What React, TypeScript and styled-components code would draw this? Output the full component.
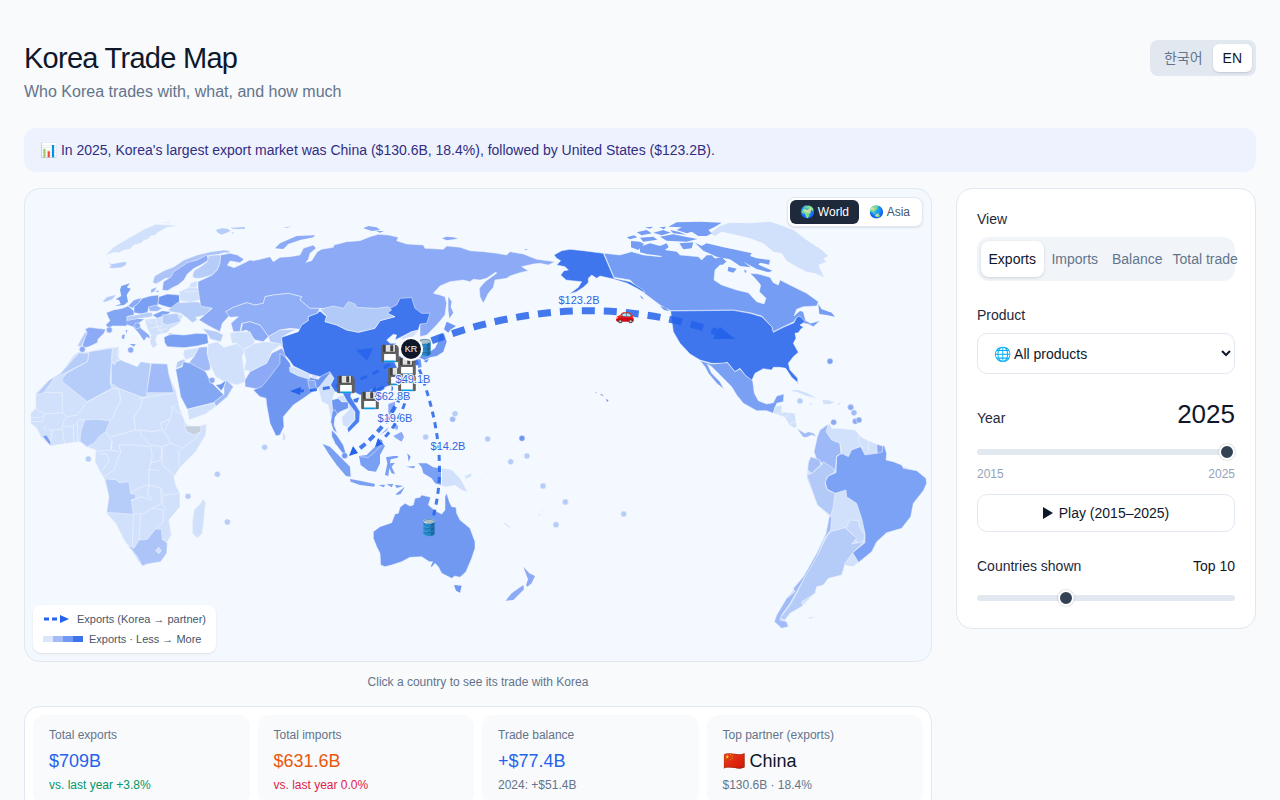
import React, { useState } from "react";
import styled, { createGlobalStyle } from "styled-components";

const Global = createGlobalStyle`
  *, *::before, *::after { box-sizing: border-box; }
  body { margin: 0; background: #f8fafc; color: #0f172a; font-family: "Liberation Sans", "Noto Sans CJK KR", sans-serif; font-size: 14px; line-height: 20px; }
  button, input, select { font: inherit; color: inherit; margin: 0; }
  h1, p, dl, dd { margin: 0; font-weight: 400; }
`;

const Page = styled.main`padding: 40px 24px;`;
const Header = styled.header`display: flex; justify-content: space-between; align-items: flex-start; margin-bottom: 24px;`;
const Title = styled.h1`font-size: 29px; line-height: 36px; letter-spacing: -0.025em;`;
const Subtitle = styled.p`margin-top: 4px; font-size: 16px; line-height: 24px; color: #64748b;`;
const Languages = styled.div`display: flex; padding: 4px; border-radius: 8px; background: #e2e8f0;`;
const Language = styled.button<{ $on?: boolean }>`
  border: 0; border-radius: 6px; padding: 4px 10px; line-height: 20px; white-space: nowrap;
  background: ${(p) => (p.$on ? "#fff" : "transparent")};
  color: ${(p) => (p.$on ? "#0f172a" : "#64748b")};
  box-shadow: ${(p) => (p.$on ? "0 1px 2px #0f172a26" : "none")};
`;
const Banner = styled.p`padding: 12px 16px; margin-bottom: 16px; border-radius: 12px; background: #eef2ff; color: #312e81;`;
const Columns = styled.div`display: grid; grid-template-columns: minmax(0, 1fr) 300px; gap: 24px; align-items: start;`;
const MapCard = styled.section`position: relative; border: 1px solid #e2e8f0; border-radius: 16px; overflow: hidden; background: #f4f9ff;`;
const MapSvg = styled.svg`display: block; width: 100%; height: auto;`;
const Scope = styled.div`
  position: absolute; top: 8px; right: 8px; display: flex; padding: 2px; border: 1px solid #e2e8f0;
  border-radius: 8px; background: #fff; box-shadow: 0 1px 2px #0f172a1a;
`;
const ScopeButton = styled.button<{ $on?: boolean }>`
  border: 0; border-radius: 6px; padding: 4px 10px; font-size: 12px; line-height: 16px;
  background: ${(p) => (p.$on ? "#1e293b" : "#fff")}; color: ${(p) => (p.$on ? "#fff" : "#475569")};
`;
const Legend = styled.div`
  position: absolute; left: 8px; bottom: 8px; display: grid; gap: 4px; padding: 6px 10px; border-radius: 8px;
  background: #fff; box-shadow: 0 1px 2px #0f172a1a; color: #475569; font-size: 11px; line-height: 16px;
`;
const LegendRow = styled.div<{ $gap: number }>`display: flex; align-items: center; gap: ${(p) => p.$gap}px;`;
const Ramp = styled.span`display: flex; width: 40px; height: 6px;`;
const RampStep = styled.span<{ $color: string }>`flex: 1; background: ${(p) => p.$color};`;
const Hint = styled.p`margin: 12px 0 16px; text-align: center; font-size: 12px; line-height: 16px; color: #64748b;`;
const Stats = styled.dl`display: grid; grid-template-columns: repeat(4, 1fr); gap: 8px; padding: 8px; border: 1px solid #e2e8f0; border-radius: 16px; background: #fff;`;
const Stat = styled.div`padding: 12px 16px; border-radius: 12px; background: #f8fafc;`;
const StatName = styled.dt`font-size: 12px; line-height: 16px; color: #64748b;`;
const StatValue = styled.dd<{ $color: string }>`margin-top: 4px; font-size: 18px; line-height: 28px; color: ${(p) => p.$color};`;
const StatNote = styled.dd<{ $color: string }>`margin-top: 2px; font-size: 12px; line-height: 16px; color: ${(p) => p.$color};`;

const Panel = styled.aside`display: grid; gap: 24px; padding: 20px; border: 1px solid #e2e8f0; border-radius: 16px; background: #fff;`;
const Field = styled.div<{ $gap?: number }>`display: grid; gap: ${(p) => p.$gap ?? 8}px;`;
const FieldLabel = styled.label`line-height: 20px; color: #1e293b;`;
const Segments = styled.div`display: grid; grid-template-columns: repeat(4, minmax(0, 1fr)); padding: 4px; border-radius: 12px; background: #f1f5f9;`;
const Segment = styled.button<{ $on?: boolean }>`
  border: 0; border-radius: 8px; padding: 8px 4px; line-height: 20px; white-space: nowrap;
  background: ${(p) => (p.$on ? "#fff" : "transparent")};
  color: ${(p) => (p.$on ? "#0f172a" : "#64748b")};
  box-shadow: ${(p) => (p.$on ? "0 1px 3px #0f172a26" : "none")};
`;
const Select = styled.select`width: 100%; height: 41px; padding: 0 12px; border: 1px solid #e2e8f0; border-radius: 10px; background: #fff;`;
const Row = styled.div`display: flex; justify-content: space-between; align-items: baseline;`;
const Year = styled.output`font-size: 26px; line-height: 32px;`;
const Range = styled.input`
  appearance: none; display: block; width: 100%; height: 20px; background: transparent;
  &::-webkit-slider-runnable-track { height: 6px; border-radius: 3px; background: #e2e8f0; }
  &::-webkit-slider-thumb { appearance: none; width: 16px; height: 16px; margin-top: -5px; border: 2px solid #fff; border-radius: 50%; background: #334155; box-shadow: 0 0 2px #0f172a4d; }
`;
const Ends = styled.div`display: flex; justify-content: space-between; font-size: 12px; line-height: 16px; color: #94a3b8;`;
const Play = styled.button`display: flex; align-items: center; justify-content: center; gap: 6px; height: 38px; border: 1px solid #e2e8f0; border-radius: 10px; background: #fff;`;

const FlowLabel = styled.text`font-size: 11px; fill: #2f66df; stroke: #f4f9ff; stroke-width: 2px; paint-order: stroke; text-anchor: middle;`;
const Cargo = styled.text`font-size: 16px; text-anchor: middle;`;

const C = {
  a: "#d2e1fb", b: "#b6ccf9", c: "#a0bbf7", d: "#8caaf5", e: "#7aa0f3", f: "#6f97f2", g: "#3f76ee", none: "#c5d0de",
};
type Shape = [string, string];
interface Region { x: number; y: number; shapes: Shape[]; islands?: Shape[]; borders?: string; dots?: [number, number, string][] }

// Each region is drawn on its own grid, three units to one unit of the map.
const regions: Region[] = [
  {
    x: 24, y: 380,
    shapes: [
      [C.a, "M165-85 195-85 250-97 285-100 285-65 300-55 340-40 350-55 380-50 430-48 434-15 455 30 466 80 480 118 490 135 515 140 548 132 545 165 515 215 470 260 450 290 455 315 468 340 468 380 435 420 442 465 430 485 428 520 410 545 370 552 355 558 340 540 335 530 300 480 275 430 248 400 255 350 240 295 225 270 213 245 215 210 185 200 170 185 130 190 80 198 50 170 38 145 20 130 20 100 35 85 35 40 75 0 110-20 150-75Z"],
      [C.b, "M115-5 130-22 190-55 195-85 280-98 262-50 258 10 265 25 190 65 115 5Z"],
      [C.b, "M35 45 75 0 110-20 165-82 195-80 190-55 130-25 90-5 60 38Z"],
      [C.b, "M262-50 290-60 340-40 350-55 380-50 368 50 355 52 285 25 262 10Z"],
      [C.a, "M265-95 285-100 280-78 285-65 270-45 262-60Z"],
      [C.c, "M382-50 430-48 434-20 450 38 368 38Z"],
      [C.b, "M182 120 215 118 258 122 245 155 225 170 210 190 190 200 168 185 170 155Z"],
      [C.b, "M243 297 275 299 285 308 315 305 320 340 335 343 335 357 322 360 328 403 248 397 255 350Z"],
      ["#acc4f8", "M312 495 330 505 345 480 370 478 395 447 412 448 415 478 430 490 428 520 410 545 370 552 355 558 340 530Z"],
      [C.e, "M55 168 68 165 80 185 80 198Z"],
      [C.none, "M480 138 530 138 530 155 510 165 490 155Z"],
      [C.a, "M538 355 545 370 535 460 520 475 505 460 505 425 510 390 528 372Z"],
      [C.a, "M395 512 404 502 412 512 404 521Z"],
    ],
    borders: "M60 38 115 38 115 98 60 102 35 85M115 98 130 110 160 105 190 65M60 102 55 125 20 125M20 113 50 112M75 150 85 150 115 148 120 120 130 110M115 148 122 192M85 150 80 185M148 138 150 190M120 140 150 138 165 118 182 120M160 130 162 186M265 25 285 28 290 60 265 115 258 122M190 65 265 25M355 52 350 80 330 110 335 150 300 160 262 170M245 155 265 185 262 210 215 215M225 222 250 222 255 245 235 270M262 185 262 210 285 215M285 195 330 195 380 200 385 230 375 270 375 315 340 325 320 340M285 195 290 215 270 270 240 290M335 150 350 150 380 155 415 150 410 130 440 115M350 150 350 165 380 195 415 200 410 240 378 250M440 115 445 80 455 80M440 115 430 135 420 155 440 190 475 205 515 175 530 155M415 200 415 255 450 285M440 190 415 200M465 210 465 255M375 268 405 272M375 315 410 325 420 345 465 340M410 325 412 370 385 385 360 400 328 403M375 315 370 345 385 355M320 362 350 350 385 360M328 403 325 500M350 405 345 480M385 385 420 390 415 430 395 447M415 345 418 375 428 390M345 55 445 40M415 478 425 478M440 80 485 115 480 135M60 140 68 150",
    dots: [[193, 237, C.b], [492, 349, C.b], [580, 283, C.b], [610, 426, C.b]],
  },
  {
    x: 24, y: 200,
    shapes: [
      [C.a, "M243 167 268 142 290 128 330 105 360 88 395 73 440 75 468 77 430 82 400 98 395 105 380 108 372 118 360 121 350 130 330 135 318 148 300 150 285 158 270 157Z"],
      [C.a, "M402 67 440 65 436 69Z"],
      [C.b, "M250 186 262 192 285 188 300 185 309 187 305 196 290 203 265 205 252 203 262 197Z"],
      ["#adc4f8", "M386 247 392 228 420 212 450 200 480 180 520 165 560 155 600 150 615 152 618 158 600 158 585 163 550 168 520 180 490 192 470 205 450 222 440 235 425 235 405 247 395 252Z"],
      [C.d, "M415 270 418 245 440 232 450 215 470 202 490 188 520 180 548 165 555 180 530 195 510 205 490 222 480 240 462 255 445 263 430 272Z"],
      [C.b, "M505 228 510 212 530 200 550 185 553 168 575 165 590 165 588 190 580 210 565 225 530 235 512 235Z"],
      ["#82a6f4", "M247 338 268 330 295 325 312 318 330 332 330 345 310 350 308 378 290 378 265 378 255 385 245 375 258 362 252 350Z"],
      [C.d, "M183 388 195 382 245 388 240 400 222 418 220 428 195 440 182 443 175 436 183 410 188 395Z"],
      [C.b, "M160 438 175 410 185 395 190 398 178 425 172 440Z"],
      [C.e, "M330 320 345 305 355 295 378 288 403 285 405 300 400 318 375 322 370 338 352 342 330 338Z"],
      [C.d, "M312 318 330 300 352 293 345 308 330 320 325 325Z"],
      [C.f, "M405 290 430 282 468 285 465 315 445 325 420 318 402 312Z"],
      [C.a, "M500 248 522 242 518 262 525 270 530 298 500 308 468 302 465 275 495 262Z"],
      [C.b, "M460 308 520 305 562 325 545 345 515 352 520 360 505 368 490 355 470 340 440 335 432 330Z"],
      [C.c, "M372 322 395 315 415 325 400 334 378 334Z"],
      ["#82a6f4", "M385 345 415 332 440 335 430 345 400 355Z"],
      [C.b, "M308 350 335 345 370 338 385 338 385 350 350 355 310 362Z"],
      [C.a, "M362 358 400 355 430 345 450 340 478 345 465 372 440 385 430 398 400 405 395 420 400 435 388 445 378 430 380 405 370 385Z"],
      [C.b, "M415 345 460 340 470 365 430 375 415 370Z"],
      [C.e, "M420 412 440 402 480 405 520 400 550 402 553 430 520 438 480 443 430 440 422 428ZM432 400 445 400 440 406Z"],
      [C.b, "M535 385 580 395 598 405 590 425 560 418 550 402Z"],
      [C.a, "M480 450 525 442 510 470 485 480 478 465Z"],
      [C.c, "M525 442 550 440 550 460 560 495 558 510 530 515 495 488 510 470Z"],
      [C.a, "M552 432 580 425 600 442 640 430 665 445 655 470 665 545 640 555 600 545 575 530 558 495 550 462Z"],
      [C.b, "M455 505 460 485 478 478 485 482 470 500Z"],
      ["#84a7f4", "M455 508 475 500 478 485 500 490 545 515 560 545 590 575 600 585 570 608 490 628 470 590 462 545Z"],
      [C.f, "M575 555 590 552 607 540 600 560 592 572Z"],
      [C.c, "M570 606 600 583 600 560 607 540 628 560 610 590 575 620Z"],
      [C.a, "M490 628 570 608 575 620 545 642 495 660Z"],
    ],
    islands: [
      [C.b, "M576 90 592 85 610 86 620 92 608 98 592 104 580 97ZM630 85 662 81 664 86 640 88ZM622 97 632 99 626 101Z"],
      [C.e, "M272 318 290 312 285 300 275 298 292 288 288 270 292 258 318 250 308 262 320 266 308 285 312 305 300 315Z"],
      [C.b, "M236 305 248 292 275 285 265 298 245 305Z"],
      [C.c, "M380 278 382 268 398 262 390 275ZM395 272 405 272 402 278Z"],
      [C.d, "M305 372 310 362 340 357 360 358 345 368 350 385 375 405 378 415 368 410 360 422 345 400 328 380ZM316 432 335 432 330 440ZM295 405 303 403 300 418 293 415ZM305 390 310 390 308 402Z"],
    ],
    borders: "M395 358 400 380 415 400M380 385 415 378M400 392 430 385M365 358 385 370M468 302 465 275M495 262 522 262M480 275 518 275",
    dots: [[256, 390, C.d], [340, 377, C.d], [175, 448, C.d], [320, 450, C.d], [564, 541, C.d]],
  },
  {
    x: 230, y: 200,
    shapes: [
      [C.d, "M-28 165 0 160 22 165 42 178 30 188 0 183-8 196 12 203 30 195 60 180 70 182 90 178 120 170 130 185 150 172 180 170 210 165 220 145 250 135 258 145 240 160 235 178 228 187 245 182 262 155 275 148 310 142 312 135 350 125 390 122 420 110 445 103 475 105 505 112 500 122 530 132 580 135 585 145 640 148 650 138 690 142 720 152 760 155 800 160 830 165 840 155 880 162 920 178 975 185 955 195 930 190 910 192 875 200 895 212 870 218 840 228 830 235 795 240 790 262 775 280 760 310 750 290 748 265 765 245 800 220 798 216 770 235 750 240 730 238 720 245 700 240 660 245 630 258 610 280 630 285 645 290 650 310 645 345 620 375 590 405 570 410 570 372 470 325 400 330 330 330 270 325 240 325 210 300 215 290 175 280 130 285 105 290 100 310 75 315 50 308 10 322-13 335 0 345-23 370-30 395-63 378-93 360-53 325-88 318-96 265-96 245-53 225-38 210-30 190Z"],
      ["#91aff6", "M-13 335 10 322 50 308 75 315 100 310 105 290 130 285 175 280 215 290 210 300 240 325 270 325 262 340 235 350 235 362 215 375 210 388 180 385 150 390 115 410 105 395 90 375 60 365 35 370 30 395 10 395 3 370 25 350 0 352Z"],
      [C.d, "M32 395 38 370 60 365 90 375 105 395 115 410 100 425 75 420 50 390Z"],
      [C.a, "M0 398 30 395 60 395 75 425 70 435 40 448 20 430 5 430Z"],
      [C.b, "M115 410 150 390 200 388 175 400 155 412 158 440 120 425Z"],
      [C.a, "M40 450 75 430 110 425 155 432 125 455 110 490 60 515 42 510 48 480Z"],
      [C.d, "M45 540 60 515 110 490 125 460 155 445 170 465 150 500 115 540 95 570 45 560Z"],
      [C.f, "M150 460 165 470 180 490 185 508 235 530 265 538 275 525 300 515 312 530 295 550 282 568 270 560 255 570 220 595 190 615 160 650 162 680 150 705 138 708 120 670 110 615 108 595 90 590 70 570 95 560 120 530 150 490Z"],
      [C.a, "M178 502 190 500 240 522 238 538 205 528 180 515ZM245 522 265 523 263 535 245 533Z"],
      [C.d, "M233 540 255 542 260 568 238 565Z"],
      [C.a, "M265 565 280 545 300 520 312 535 302 555 315 575 305 605 312 640 302 655 295 615 275 605Z"],
      [C.a, "M158 695 168 708 165 722 158 720Z"],
      [C.g, "M270 333 290 350 285 365 320 375 350 390 385 397 435 385 450 362 495 350 470 340 480 325 500 315 510 295 545 293 555 325 575 340 600 340 590 370 570 372 565 390 545 395 515 410 495 420 500 405 490 403 470 420 480 430 500 430 480 440 478 455 500 500 500 530 480 555 440 575 390 585 365 572 340 580 315 575 302 555 312 535 300 515 270 530 240 522 190 498 178 480 165 465 158 440 155 412 205 395 215 375 235 362 235 350 262 340Z"],
      ["#b2caf8", "M270 328 310 318 340 325 355 305 375 312 380 322 440 325 475 320 485 330 472 340 495 350 450 362 435 385 385 397 350 390 320 375 285 365 290 348Z"],
      [C.a, "M515 412 545 395 565 392 545 415 545 430 520 425Z"],
      [C.none, "M520 428 545 430 560 460 540 470Z"],
    ],
    islands: [
      [C.d, "M655 290 665 305 662 320 670 338 658 355 655 330ZM135 145 150 130 200 108 255 106 250 112 210 120 175 132 160 147ZM400 85 415 78 440 82 450 90 425 93ZM438 93 462 93 450 98ZM636 115 650 110 670 112 684 116 650 121ZM880 148 895 147 888 150Z"],
      [C.b, "M0 83 45 82 42 86 10 87ZM160 82 185 79 170 84Z"],
      [C.f, "M650 365 678 378 660 390 655 398 642 388ZM628 405 642 400 650 425 640 455 620 468 600 472 585 480 565 472 600 455 615 445 625 425ZM560 478 572 478 575 500 565 505ZM580 483 597 477 590 488Z"],
      [C.g, "M370 598 388 592 382 608 370 605ZM485 555 490 565 484 580Z"],
    ],
  },
  {
    x: 260, y: 330,
    shapes: [
      [C.f, "M215 210 235 205 245 215 265 215 265 235 240 245 232 252 225 262 222 285 232 310 220 300 212 275 218 240Z"],
      [C.a, "M232 200 250 195 262 215 285 240 285 270 260 292 248 285 245 262 268 238 265 215 245 215Z"],
      ["#4d80f0", "M248 190 275 180 272 200 300 245 298 275 265 308 262 295 285 270 285 245 262 215Z"],
      [C.f, "M215 300 230 315 250 345 258 372 248 370 225 340 215 318Z"],
    ],
    islands: [
      [C.e, "M188 342 210 350 240 380 270 410 272 440 258 438 230 405 205 370ZM270 447 300 452 345 462 343 470 300 465 272 455ZM355 465 375 464 372 472ZM380 463 400 462 395 472ZM405 464 430 468 410 474ZM410 490 435 470 422 492 408 496Z"],
      [C.e, "M297 378 320 375 345 350 365 335 375 348 360 375 360 400 348 425 325 422 302 405ZM378 382 400 378 415 378 412 384 392 388 390 400 405 398 395 410 405 432 395 430 388 415 385 438 375 435 382 400ZM442 370 452 380 446 395ZM438 410 465 408 462 415Z"],
      [C.d, "M385 222 405 215 405 240 395 255 410 272 395 265 385 250ZM400 318 425 305 432 320 425 335 408 325ZM360 315 385 292 380 302ZM400 280 415 288 412 300 402 295Z"],
      [C.e, "M475 400 500 400 520 412 543 415 543 465 525 460 515 445 490 430 485 412Z"],
      [C.a, "M546 415 575 420 600 445 622 485 605 480 585 465 560 470 546 468ZM610 440 635 430 632 440Z"],
    ],
    borders: "M300 380 325 382 345 365 365 345M232 252 225 240 218 240",
    dots: [[14, 352, C.b], [497, 321, C.b], [340, 186, C.g], [254, 377, C.f]],
  },
  {
    x: 360, y: 470,
    shapes: [
      ["#7199f1", "M40 185 60 170 95 158 105 132 115 130 120 112 135 100 150 108 160 105 165 85 180 82 185 75 212 82 205 105 225 122 245 132 255 120 255 80 260 70 268 95 275 110 288 112 290 130 300 150 330 175 345 215 345 235 335 265 318 305 300 322 285 318 275 325 245 310 235 290 225 280 215 292 212 288 218 275 208 275 185 260 150 262 125 275 95 285 75 290 62 285 60 250 50 230 40 205Z"],
    ],
    islands: [
      ["#7199f1", "M282 345 305 347 300 368 288 362Z"],
      [C.d, "M490 290 508 310 525 318 515 340 502 350 498 345 504 328ZM490 345 492 358 460 390 437 392 455 370Z"],
      [C.a, "M430 155 452 172 448 173 432 160ZM315 25 335 12 333 18 318 28Z"],
    ],
    dots: [[549, 48, C.b], [616, 96, C.b], [588, 164, C.b]],
  },
  {
    x: 440, y: 380,
    shapes: [],
    islands: [[C.f, "M498 57 506 61 501 66ZM480 42 486 43 492 49 484 46ZM464 37 471 38 468 40Z"], [C.a, "M294 402 300 402 298 407ZM120 295 125 298 121 298ZM306 392 311 392 309 395ZM-483 690-478 690-480 693Z"]],
    dots: [[45, 101, C.b], [38, 118, C.c], [143, 177, C.b], [246, 175, C.f], [212, 245, C.b], [261, 228, C.b], [309, 318, C.b], [376, 366, C.b], [348, 434, C.b], [551, 402, C.b]],
  },
  {
    x: 640, y: 190,
    shapes: [
      ["#759df3", "M-108 190-60 195-25 185 10 195 60 200 90 190 120 195 175 200 185 210 200 195 215 195 225 205 245 200 260 215 248 225 240 225 225 240 222 270 245 285 290 300 325 308 350 335 372 342 378 325 358 305 362 285 345 265 330 250 355 252 390 262 400 278 415 285 420 270 460 290 500 310 535 335 530 348 490 350 470 358 462 378 480 362 490 365 497 392 512 400 540 392 520 410 505 402 488 400 480 378 468 385 462 395 430 410 400 425 395 410 365 378 330 368 280 360 92 362 60 345 20 315 0 300-30 270-78 262Z"],
      [C.g, "M92 363 280 361 330 370 365 380 395 410 400 427 430 412 462 398 470 382 480 378 495 395 480 405 490 412 482 418 475 428 465 430 468 445 460 460 475 487 460 500 445 520 450 540 473 565 473 578 455 562 437 535 420 532 400 532 395 540 370 536 345 550 335 572 315 555 300 535 285 545 262 517 250 520 215 520 180 510 150 492 120 460 100 425 95 390Z"],
      [C.e, "M180 512 215 522 262 518 285 545 300 537 318 558 338 572 343 610 355 632 380 642 400 638 410 618 432 612 430 635 410 640 400 670 380 662 350 662 310 640 290 615 275 590 235 550 215 530 202 522 215 550 240 575 252 598 230 580 205 550 195 530Z"],
    ],
    islands: [
      [C.a, "M240 108 270 98 330 100 390 95 420 105 460 120 500 150 545 180 565 198 550 205 558 215 535 225 552 262 525 250 500 245 470 230 440 212 425 190 400 185 370 160 330 145 290 135 245 125 225 138 210 130Z"],
      ["#759df3", "M535 342 545 358 575 368 585 380 560 375 538 372Z"],
      ["#759df3", "M85 110 110 97 180 95 245 98 225 110 205 120 215 130 200 138 175 138 155 125 140 130 110 120 125 112ZM0 170 30 160 60 168 80 160 86 172 74 180 110 185 120 195 95 203 60 197 20 192 0 187ZM-27 153 0 155 12 162-5 180-27 172ZM165 158 185 168 200 160 250 172 290 180 335 190 330 198 350 205 390 210 387 224 360 218 355 224 397 242 385 247 350 237 310 215 332 232 300 228 270 208 230 200 190 182ZM60 140 100 133 140 141 172 147 140 155 80 152ZM118 160 160 157 155 175 130 178ZM0 143 40 140 52 149 10 155ZM-10 127 20 120 35 130 5 136ZM40 128 70 120 92 128 65 136ZM90 120 118 126 138 134 100 130ZM-40 142-18 136-8 142-30 148ZM15 112 40 110 30 116ZM58 112 78 110 72 118ZM265 230 290 236 280 248 263 243ZM312 240 320 242 316 250Z"],
      [C.a, "M450 603 470 599 500 608 530 625 500 618 470 605ZM548 630 565 631 582 636 570 643 550 641ZM592 640 602 640 598 645ZM470 577 476 580 472 583ZM508 640 520 641 512 644Z"],
    ],
    dots: [[570, 514, C.e], [480, 633, C.b], [632, 652, C.d]],
  },
  {
    x: 440, y: 200,
    shapes: [[C.g, "M342 165 365 152 390 148 430 152 490 160 522 235 545 240 570 245 610 270 615 278 600 270 562 250 520 237 480 228 470 235 455 225 445 235 445 248 430 262 410 275 388 282 415 262 425 245 395 242 378 240 362 225 372 212 385 210 375 200 350 195 362 182 350 175Z"]],
    islands: [[C.e, "M600 286 606 290 612 298 604 295ZM660 318 676 322 688 334 672 330Z"]],
  },
  {
    x: 740, y: 400,
    shapes: [
      [C.a, "M100 40 105 20 125 15 125 35 165 40 170 80 163 85 145 72 135 52Z"],
      [C.c, "M170 85 195 100 205 95 222 100 228 110 215 105 200 112 190 112Z"],
      [C.a, "M232 110 262 78 270 70 275 85 300 85 345 90 358 105 370 115 405 130 430 140 440 180 490 200 530 212 558 235 555 262 520 310 512 350 485 385 440 398 410 425 395 455 352 490 340 500 310 495 305 525 265 535 250 555 230 560 225 580 190 615 150 640 135 660 145 675 125 685 103 665 110 645 140 595 190 530 230 460 258 400 268 348 232 315 200 235 205 180 228 170Z"],
      ["#7ba2f4", "M290 170 305 160 325 170 335 150 362 140 375 165 410 160 432 135 440 160 438 180 460 185 485 195 490 205 530 212 558 235 560 250 550 272 520 310 512 350 485 385 440 398 410 425 395 455 356 487 338 458 375 428 375 400 365 355 350 310 320 290 318 270 285 280 262 268 255 245 265 228 288 218Z"],
      ["#9eb9f7", "M232 110 240 90 265 72 258 95 275 120 300 130 303 160 290 168 285 215 270 205 230 178 222 155Z"],
      ["#a6bff7", "M205 190 212 170 240 180 242 195 215 220 203 210Z"],
      ["#b3caf8", "M200 225 215 220 245 195 250 185 280 205 285 215 262 230 255 250 262 270 285 280 280 320 272 347 232 315Z"],
      ["#c5d7fa", "M318 385 330 360 355 362 360 385 375 405 370 425 350 430 345 410Z"],
      ["#b5ccf8", "M272 395 315 383 350 415 335 432 372 425 338 458 315 490 310 510 305 525 265 535 250 555 230 560 225 580 185 605 188 618 150 640 135 660 120 655 150 615 170 580 200 520 235 460 260 410Z"],
      [C.c, "M268 348 275 350 272 390 255 412 230 470 195 530 170 575 150 610 125 645 120 660 140 665 145 680 125 685 103 665 110 645 140 595 165 575 160 565 190 530 230 460 258 400Z"],
      [C.d, "M410 133 428 138 428 155 412 160Z"],
    ],
    islands: [[C.a, "M203 652 222 652 212 656Z"]],
    borders: "M358 105 355 125 370 145M385 122 385 155M300 130 305 165M140 52 145 42M150 70 168 65M110 40 130 38",
    dots: [[332, 22, C.d], [342, 38, C.c], [346, 64, C.d], [357, 60, C.d], [281, 67, C.d]],
  },
];

interface Flow { d: string; w: number; dash: string; head: string }
const flows: Flow[] = [
  { d: "M411 349Q573 281 722 334", w: 7, dash: "13 9", head: "735,339 713,339 720,327" },
  { d: "M411 349Q365 388 300 391", w: 3, dash: "7 6", head: "290,391 301,387 300,395" },
  { d: "M411 349Q406 415 355 452", w: 4, dash: "7 5", head: "349,456 353,446 358,453" },
  { d: "M411 349Q414 410 381 441", w: 3, dash: "6 5", head: "375,447 378,438 383,444" },
  { d: "M411 349Q402 380 376 391", w: 4, dash: "7 5", head: "368,395 375,386 378,394" },
  { d: "M411 349Q455 450 431 524", w: 3, dash: "6 5", head: "429,531 427,522 434,524" },
];
const cargo: [number, number, string][] = [
  [425, 353, "🛢️"], [390, 359, "💾"], [346, 390, "💾"], [370, 406, "💾"], [397, 382, "💾"], [407, 372, "💾"],
  [407, 388, "💾"], [625, 320, "🚗"], [429, 533, "🛢️"],
];
const labels: [number, number, string][] = [
  [579, 304, "$123.2B"], [413, 383, "$49.1B"], [393, 400, "$62.8B"], [395, 422, "$19.6B"], [448, 450, "$14.2B"],
];

function TradeMap() {
  return (
    <MapSvg viewBox="25 189 906 472" role="img" aria-label="Korea exports by partner">
      {regions.map((r, i) => (
        <g key={i} transform={`translate(${r.x} ${r.y}) scale(.33333)`} stroke="#f4f9ff" strokeWidth="1.5" strokeLinejoin="round">
          {r.shapes.map(([fill, d], j) => <path key={j} fill={fill} d={d} />)}
          {r.islands?.map(([fill, d], j) => <path key={j} fill={fill} stroke="none" d={d} />)}
          {r.borders && <path fill="none" d={r.borders} />}
          {r.dots?.map(([x, y, fill], j) => <circle key={j} cx={x} cy={y} r="9" fill={fill} />)}
        </g>
      ))}
      <g stroke="#2563eb" fill="none" opacity=".85">
        {flows.map((f) => <path key={f.d} d={f.d} strokeWidth={f.w} strokeDasharray={f.dash} />)}
      </g>
      <g fill="#2563eb">
        {flows.map((f) => <polygon key={f.d} points={f.head} />)}
        <polygon points="356,350 373,348 367,361" opacity=".8" />
      </g>
      {cargo.map(([x, y, t]) => <Cargo key={`${x}-${y}`} x={x} y={y}>{t}</Cargo>)}
      {labels.map(([x, y, t]) => <FlowLabel key={t} x={x} y={y}>{t}</FlowLabel>)}
      <circle cx="411" cy="349" r="11" fill="#0f172a" stroke="#fff" strokeWidth="2" />
      <text x="411" y="352" fontSize="9" fill="#fff" textAnchor="middle">KR</text>
    </MapSvg>
  );
}

const stats = [
  { name: "Total exports", value: "$709B", color: "#2563eb", note: "vs. last year +3.8%", noteColor: "#059669" },
  { name: "Total imports", value: "$631.6B", color: "#ea580c", note: "vs. last year 0.0%", noteColor: "#e11d48" },
  { name: "Trade balance", value: "+$77.4B", color: "#2563eb", note: "2024: +$51.4B", noteColor: "#64748b" },
  { name: "Top partner (exports)", value: "🇨🇳 China", color: "#0f172a", note: "$130.6B · 18.4%", noteColor: "#64748b" },
];
const views = ["Exports", "Imports", "Balance", "Total trade"];

export default function App() {
  const [view, setView] = useState("Exports");
  const [year, setYear] = useState(2025);
  const [top, setTop] = useState(10);
  return (
    <Page>
      <Global />
      <Header>
        <div>
          <Title>Korea Trade Map</Title>
          <Subtitle>Who Korea trades with, what, and how much</Subtitle>
        </div>
        <Languages>
          <Language>한국어</Language>
          <Language $on>EN</Language>
        </Languages>
      </Header>
      <Banner>📊 In 2025, Korea's largest export market was China ($130.6B, 18.4%), followed by United States ($123.2B).</Banner>
      <Columns>
        <div>
          <MapCard>
            <TradeMap />
            <Scope>
              <ScopeButton $on>🌍 World</ScopeButton>
              <ScopeButton>🌏 Asia</ScopeButton>
            </Scope>
            <Legend>
              <LegendRow $gap={8}>
                <svg width="26" height="8" viewBox="0 0 26 8" aria-hidden="true">
                  <path d="M1 4H18" stroke="#2563eb" strokeWidth="3" strokeDasharray="5 3" />
                  <path d="M17 0 26 4 17 8Z" fill="#2563eb" />
                </svg>
                Exports (Korea → partner)
              </LegendRow>
              <LegendRow $gap={6}>
                <Ramp>{["#dbe6fd", "#a3bcf7", "#7198f3", "#3c72eb"].map((c) => <RampStep key={c} $color={c} />)}</Ramp>
                Exports · Less → More
              </LegendRow>
            </Legend>
          </MapCard>
          <Hint>Click a country to see its trade with Korea</Hint>
          <Stats>
            {stats.map((s) => (
              <Stat key={s.name}>
                <StatName>{s.name}</StatName>
                <StatValue $color={s.color}>{s.value}</StatValue>
                <StatNote $color={s.noteColor}>{s.note}</StatNote>
              </Stat>
            ))}
          </Stats>
        </div>
        <Panel>
          <Field>
            <FieldLabel as="span">View</FieldLabel>
            <Segments>
              {views.map((v) => <Segment key={v} $on={v === view} onClick={() => setView(v)}>{v}</Segment>)}
            </Segments>
          </Field>
          <Field>
            <FieldLabel htmlFor="product">Product</FieldLabel>
            <Select id="product"><option>🌐 All products</option></Select>
          </Field>
          <Field $gap={12}>
            <Row>
              <FieldLabel htmlFor="year">Year</FieldLabel>
              <Year>{year}</Year>
            </Row>
            <Field $gap={4}>
              <Range id="year" type="range" min={2015} max={2025} value={year} onChange={(e) => setYear(+e.target.value)} />
              <Ends><span>2015</span><span>2025</span></Ends>
            </Field>
            <Play>
              <svg width="10" height="12" viewBox="0 0 10 12" aria-hidden="true"><path d="M0 0 10 6 0 12Z" fill="#0f172a" /></svg>
              Play (2015–2025)
            </Play>
          </Field>
          <Field $gap={12}>
            <Row>
              <FieldLabel htmlFor="top">Countries shown</FieldLabel>
              <span>Top {top}</span>
            </Row>
            <Range id="top" type="range" min={3} max={24} value={top} onChange={(e) => setTop(+e.target.value)} />
          </Field>
        </Panel>
      </Columns>
    </Page>
  );
}
